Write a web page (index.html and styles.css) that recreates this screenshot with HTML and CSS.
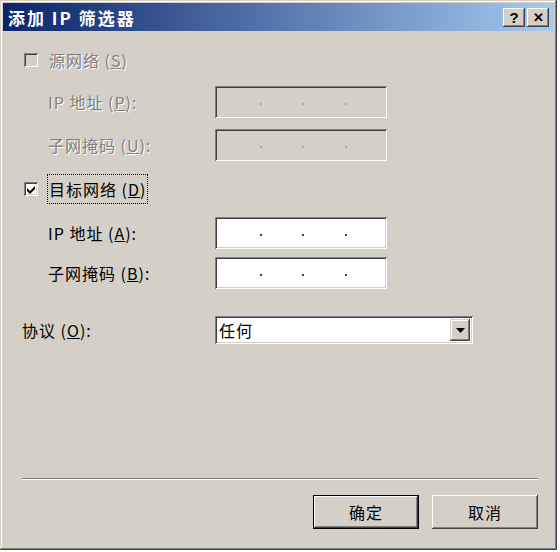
FILE: index.html
```html
<!DOCTYPE html>
<html lang="zh-CN">
<head>
  <meta charset="UTF-8">
  <title>添加 IP 筛选器</title>
  <link rel="stylesheet" href="styles.css">
</head>
<body>

  <div class="window">
    <!-- Title bar -->
    <div class="titlebar">
      <div class="title">添加 IP 筛选器</div>
      <div class="title-buttons">
        <span class="title-btn">?</span>
        <span class="title-btn close">&#x2715;</span>
      </div>
    </div>

    <div class="content">
      <!-- Source network (disabled) -->
      <div class="row row-src disabled">
        <span class="checkbox"></span>
        <span class="check-label">源网络 (<u>S</u>)</span>
      </div>
      <div class="row row-field row-src-ip disabled">
        <span class="field-label">IP 地址 (<u>P</u>):</span>
        <div class="ip-box"><span class="dot"></span><span class="dot"></span><span class="dot"></span></div>
      </div>
      <div class="row row-field row-src-mask disabled">
        <span class="field-label">子网掩码 (<u>U</u>):</span>
        <div class="ip-box"><span class="dot"></span><span class="dot"></span><span class="dot"></span></div>
      </div>

      <!-- Destination network -->
      <div class="row row-dst">
        <span class="checkbox checked">
          <svg width="10" height="10" viewBox="0 0 10 10"><path d="M1 4 L4 7 L9 2 L9 5 L4 10 L1 7 Z" fill="#000"/></svg>
        </span>
        <span class="check-label focus">目标网络 (<u>D</u>)</span>
      </div>
      <div class="row row-field row-dst-ip">
        <span class="field-label">IP 地址 (<u>A</u>):</span>
        <div class="ip-box"><span class="dot"></span><span class="dot"></span><span class="dot"></span></div>
      </div>
      <div class="row row-field row-dst-mask">
        <span class="field-label">子网掩码 (<u>B</u>):</span>
        <div class="ip-box"><span class="dot"></span><span class="dot"></span><span class="dot"></span></div>
      </div>

      <!-- Protocol -->
      <div class="row row-proto">
        <span class="proto-label">协议 (<u>O</u>):</span>
        <div class="select">
          <span class="select-text">任何</span>
          <span class="select-arrow">
            <svg width="9" height="5" viewBox="0 0 9 5"><path d="M0 0 H9 L4.5 5 Z" fill="#000"/></svg>
          </span>
        </div>
      </div>

      <div class="spacer"></div>
      <div class="separator"></div>

      <div class="buttons">
        <button class="btn default">确定</button>
        <button class="btn">取消</button>
      </div>
    </div>
  </div>

</body>
</html>
```

FILE: styles.css
```css
* {
  box-sizing: border-box;
  margin: 0;
  padding: 0;
}

body {
  font-family: "Noto Sans CJK SC", "Liberation Sans", sans-serif;
  font-size: 16px;
  background-color: #ffffff;
}

.window {
  width: 557px;
  height: 550px;
  background-color: #d4d0c8;
  padding: 3px;
  display: flex;
  flex-direction: column;
  box-shadow: inset -1px -1px #404040, inset 1px 1px #d4d0c8,
              inset -2px -2px #808080, inset 2px 2px #ffffff;
}

/* Title bar */
.titlebar {
  height: 28px;
  background: linear-gradient(to right, #0a246a, #a6caf0);
  display: flex;
  align-items: center;
  justify-content: space-between;
  padding: 0 5px 0 5px;
}

.title {
  color: #ffffff;
  font-weight: bold;
  font-size: 17px;
  letter-spacing: 2px;
  white-space: pre;
}

.title-buttons {
  display: flex;
  gap: 2px;
}

.title-btn {
  width: 22px;
  height: 19px;
  background-color: #d4d0c8;
  display: flex;
  align-items: center;
  justify-content: center;
  font-family: "Liberation Sans", sans-serif;
  font-weight: bold;
  font-size: 15px;
  color: #000;
  box-shadow: inset -1px -1px #404040, inset 1px 1px #ffffff,
              inset -2px -2px #808080;
}

.title-btn.close {
  font-size: 13px;
}

/* Content */
.content {
  flex: 1;
  display: flex;
  flex-direction: column;
  padding: 0 16px 18px 19px;
  letter-spacing: 1px;
}

.row {
  display: flex;
  align-items: center;
  height: 32px;
}

.row-src { margin-top: 13px; }
.row-src-ip { margin-top: 10px; }
.row-src-mask { margin-top: 11px; }
.row-dst { margin-top: 13px; height: 30px; }
.row-dst-ip { margin-top: 13px; }
.row-dst-mask { margin-top: 8px; }
.row-proto { margin-top: 27px; height: 28px; }

.disabled {
  color: #808080;
  text-shadow: 1px 1px #ffffff;
}

.checkbox {
  width: 14px;
  height: 14px;
  margin-left: 2px;
  background-color: #d4d0c8;
  display: flex;
  align-items: center;
  justify-content: center;
  box-shadow: inset 1px 1px #808080, inset -1px -1px #ffffff,
              inset 2px 2px #404040, inset -2px -2px #d4d0c8;
}

.checkbox.checked {
  background-color: #ffffff;
}

.check-label {
  margin-left: 9px;
  padding: 2px 1px;
  border: 1px dotted transparent;
}

.check-label.focus {
  border-color: #000000;
}

.field-label {
  width: 193px;
  padding-left: 26px;
}

.ip-box {
  width: 172px;
  height: 32px;
  display: grid;
  grid-template-columns: repeat(3, 1fr);
  justify-items: center;
  padding: 0 20px 0 25px;
  align-items: center;
  background-color: #ffffff;
  box-shadow: inset 1px 1px #808080, inset -1px -1px #ffffff,
              inset 2px 2px #404040, inset -2px -2px #d4d0c8;
}

.dot {
  width: 2px;
  height: 2px;
  margin-top: 4px;
  background-color: #404040;
}

.disabled .ip-box {
  background-color: #d4d0c8;
}

.disabled .dot {
  background-color: #a8a8a8;
}

.proto-label {
  width: 193px;
}

.select {
  width: 258px;
  height: 28px;
  display: flex;
  align-items: center;
  justify-content: space-between;
  background-color: #ffffff;
  padding: 2px;
  box-shadow: inset 1px 1px #808080, inset -1px -1px #ffffff,
              inset 2px 2px #404040, inset -2px -2px #d4d0c8;
}

.select-text {
  padding-left: 2px;
}

.select-arrow {
  width: 20px;
  height: 22px;
  margin-right: 1px;
  background-color: #d4d0c8;
  display: flex;
  align-items: center;
  justify-content: center;
  box-shadow: inset -1px -1px #404040, inset 1px 1px #d4d0c8,
              inset -2px -2px #808080, inset 2px 2px #ffffff;
}

.spacer {
  flex: 1;
}

.separator {
  height: 2px;
  border-top: 1px solid #808080;
  border-bottom: 1px solid #ffffff;
}

.buttons {
  display: flex;
  justify-content: flex-end;
  gap: 13px;
  margin-top: 15px;
}

.btn {
  width: 106px;
  height: 34px;
  background-color: #d4d0c8;
  border: none;
  font-family: inherit;
  font-size: 16px;
  letter-spacing: 1px;
  color: #000;
  box-shadow: inset -1px -1px #404040, inset 1px 1px #ffffff,
              inset -2px -2px #808080, inset 2px 2px #d4d0c8;
}

.btn.default {
  border: 1px solid #000000;
}
```
